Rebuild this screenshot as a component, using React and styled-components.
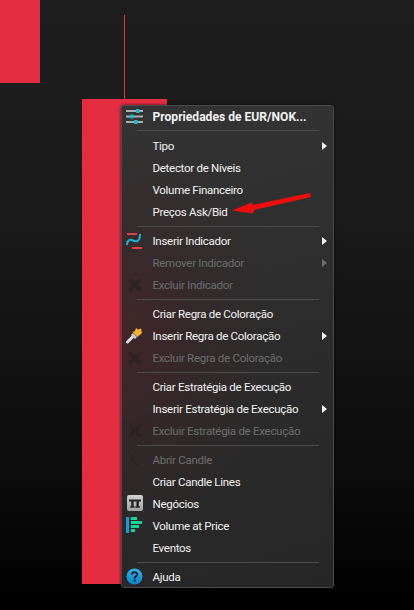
import React from 'react';
import styled, { createGlobalStyle } from 'styled-components';

const Global = createGlobalStyle`
  html, body { margin: 0; padding: 0; background: #000; }
  #root { width: 414px; height: 610px; }
`;

const Chart = styled.div`
  position: relative;
  width: 414px;
  height: 610px;
  overflow: hidden;
  background: linear-gradient(180deg, #1e1e1e 0%, #1a1a1a 35%, #0d0d0d 75%, #000 100%);
  font-family: Roboto, "Noto Sans", sans-serif;
`;

const CandleBody = styled.div`
  position: absolute;
  left: ${p => p.$x}px;
  top: ${p => p.$y}px;
  width: ${p => p.$w}px;
  height: ${p => p.$h}px;
  background: #e52d42;
`;

const Menu = styled.div`
  position: absolute;
  left: 121px;
  top: 105px;
  width: 213px;
  height: 483px;
  box-sizing: border-box;
  border: 1px solid #4a4a4a;
  border-radius: 3px;
  overflow: hidden;
  display: flex;
  flex-direction: column;
  background:
    radial-gradient(ellipse 150px 210px at 0% 48%, rgba(78, 32, 38, 0.62) 0%, rgba(64, 34, 38, 0.3) 55%, rgba(40, 40, 40, 0) 100%),
    linear-gradient(165deg, #343434 0%, #2d2d2d 45%, #262626 100%);
  box-shadow: 0 0 3px rgba(0, 0, 0, 0.7);
`;

const Row = styled.div`
  flex: none;
  height: ${p => (p.$title ? 21 : 22)}px;
  display: flex;
  align-items: center;
  position: relative;
  padding-left: 30.5px;
  font-size: ${p => (p.$title ? 12.1 : 11.5)}px;
  font-weight: ${p => (p.$title ? 700 : 400)};
  letter-spacing: ${p => (p.$title ? 0 : -0.28)}px;
  color: ${p => (p.$disabled ? '#6e6e6e' : '#f2f2f2')};
  white-space: nowrap;
`;

const IconSlot = styled.span`
  position: absolute;
  left: 4px;
  top: 2px;
  width: 17px;
  height: 17px;
  display: flex;
  align-items: center;
  justify-content: center;
`;

const Chevron = styled.span`
  position: absolute;
  right: 6px;
  top: 7px;
  width: 0;
  height: 0;
  border-left: 5px solid ${p => (p.$disabled ? '#6e6e6e' : '#f2f2f2')};
  border-top: 4px solid transparent;
  border-bottom: 4px solid transparent;
`;

const Separator = styled.div`
  flex: none;
  height: 1px;
  margin: 3px 14px ${p => (p.$first ? 4 : 3)}px 15px;
  background: #4c4c4c;
`;

const Annotation = styled.svg`
  position: absolute;
  left: 225px;
  top: 188px;
`;

const Sliders = () => (
  <svg width="17" height="15" viewBox="0 0 17 15">
    <g fill="#aeaeae">
      <rect x="0" y="1" width="17" height="2" />
      <rect x="0" y="6.5" width="17" height="2" />
      <rect x="0" y="12" width="17" height="2" />
    </g>
    <g fill="#12bcd8">
      <rect x="10" y="0" width="3.5" height="4" />
      <rect x="4" y="5.5" width="3.5" height="4" />
      <rect x="8" y="11" width="3.5" height="4" />
    </g>
  </svg>
);

const Indicator = () => (
  <svg width="17" height="17" viewBox="0 0 17 17">
    <rect x="1" y="1" width="10" height="2" fill="#e0404a" />
    <rect x="6" y="15" width="10" height="2" fill="#e0404a" />
    <path d="M1 13 C1 8 4 7 7 8.5 C10 10 14 10 14 2" fill="none" stroke="#17b4dc" strokeWidth="2" />
  </svg>
);

const Cross = () => (
  <svg width="14" height="14" viewBox="0 0 14 14">
    <path d="M1.5 1.5 L12.5 12.5 M12.5 1.5 L1.5 12.5" stroke="#2e2223" strokeWidth="3.8" />
  </svg>
);

const Brush = () => (
  <svg width="17" height="17" viewBox="0 0 17 17">
    <path d="M1.5 15 L7 9.5" stroke="#dcdcdc" strokeWidth="3" strokeLinecap="round" />
    <path d="M5 8 L9 12 L11 10 L7 6 Z" fill="#c9c9c9" />
    <path d="M6.5 5 L9 4 L10 1 L12 2.5 L15 1.5 L16 6 L11.5 10 Z" fill="#eeb32f" />
  </svg>
);

const Candle = () => (
  <svg width="14" height="14" viewBox="0 0 14 14">
    <path d="M3 1 H6 V9 L11 12 L10 13 L5 10 H3 Z" fill="#2e2324" />
  </svg>
);

const Trades = () => (
  <svg width="16" height="17" viewBox="0 0 16 17">
    <defs>
      <linearGradient id="tradesFill" x1="0" y1="0" x2="0" y2="1">
        <stop offset="0" stopColor="#cfcfcf" />
        <stop offset="1" stopColor="#a4a4a4" />
      </linearGradient>
    </defs>
    <rect x="0" y="0" width="16" height="16" rx="2" fill="url(#tradesFill)" />
    <path d="M2 4.5 H14 V6.5 H2 Z M4.2 6.5 H6.6 V11.5 H4.2 Z M9.4 6.5 H11.8 V11.5 H9.4 Z M3.2 11.2 H7.6 V12.8 H3.2 Z M8.4 11.2 H12.8 V12.8 H8.4 Z" fill="#242424" />
  </svg>
);

const VolumePrice = () => (
  <svg width="17" height="17" viewBox="0 0 17 17">
    <rect x="0" y="0" width="3" height="16" fill="#0f9ddf" />
    <rect x="5" y="0" width="6" height="3" fill="#0fd69a" />
    <rect x="5" y="4" width="11" height="3" fill="#0fd69a" />
    <rect x="5" y="8" width="8" height="3" fill="#0fd69a" />
    <rect x="5" y="12" width="4" height="3" fill="#0fd69a" />
  </svg>
);

const Help = () => (
  <svg width="17" height="17" viewBox="0 0 17 17">
    <defs>
      <linearGradient id="helpFill" x1="0" y1="0" x2="0" y2="1">
        <stop offset="0" stopColor="#2ab6ee" />
        <stop offset="1" stopColor="#0b83c8" />
      </linearGradient>
    </defs>
    <circle cx="8.5" cy="8.5" r="8" fill="url(#helpFill)" />
    <path d="M5.8 6.6 C5.8 3.4 11.2 3.4 11.2 6.4 C11.2 8.4 8.6 8.2 8.6 10.4" fill="none" stroke="#0c1a22" strokeWidth="1.9" />
    <rect x="7.6" y="11.5" width="2" height="2" fill="#0c1a22" />
  </svg>
);

const Item = ({ icon, children, disabled, sub, title }) => (
  <Row $disabled={disabled} $title={title}>
    {icon && <IconSlot>{icon}</IconSlot>}
    {children}
    {sub && <Chevron $disabled={disabled} />}
  </Row>
);

export default function App() {
  return (
    <Chart>
      <Global />
      <CandleBody $x={0} $y={0} $w={40} $h={83} />
      <CandleBody $x={124} $y={15} $w={1} $h={84} />
      <CandleBody $x={82} $y={99} $w={85} $h={485} />
      <Menu>
        <Item title icon={<Sliders />}>Propriedades de EUR/NOK...</Item>
        <Separator $first />
        <Item sub>Tipo</Item>
        <Item>Detector de Níveis</Item>
        <Item>Volume Financeiro</Item>
        <Item>Preços Ask/Bid</Item>
        <Separator />
        <Item sub icon={<Indicator />}>Inserir Indicador</Item>
        <Item sub disabled>Remover Indicador</Item>
        <Item disabled icon={<Cross />}>Excluir Indicador</Item>
        <Separator />
        <Item>Criar Regra de Coloração</Item>
        <Item sub icon={<Brush />}>Inserir Regra de Coloração</Item>
        <Item disabled icon={<Cross />}>Excluir Regra de Coloração</Item>
        <Separator />
        <Item>Criar Estratégia de Execução</Item>
        <Item sub>Inserir Estratégia de Execução</Item>
        <Item disabled icon={<Cross />}>Excluir Estratégia de Execução</Item>
        <Separator />
        <Item disabled icon={<Candle />}>Abrir Candle</Item>
        <Item>Criar Candle Lines</Item>
        <Item icon={<Trades />}>Negócios</Item>
        <Item icon={<VolumePrice />}>Volume at Price</Item>
        <Item>Eventos</Item>
        <Separator />
        <Item icon={<Help />}>Ajuda</Item>
      </Menu>
      <Annotation width="90" height="30" viewBox="0 0 90 30">
        <path d="M7 22.5 L27 14.5 L28 17 L85 5 L86 9 L29 22 L28 25.5 Z" fill="#f00d0d" />
      </Annotation>
    </Chart>
  );
}
